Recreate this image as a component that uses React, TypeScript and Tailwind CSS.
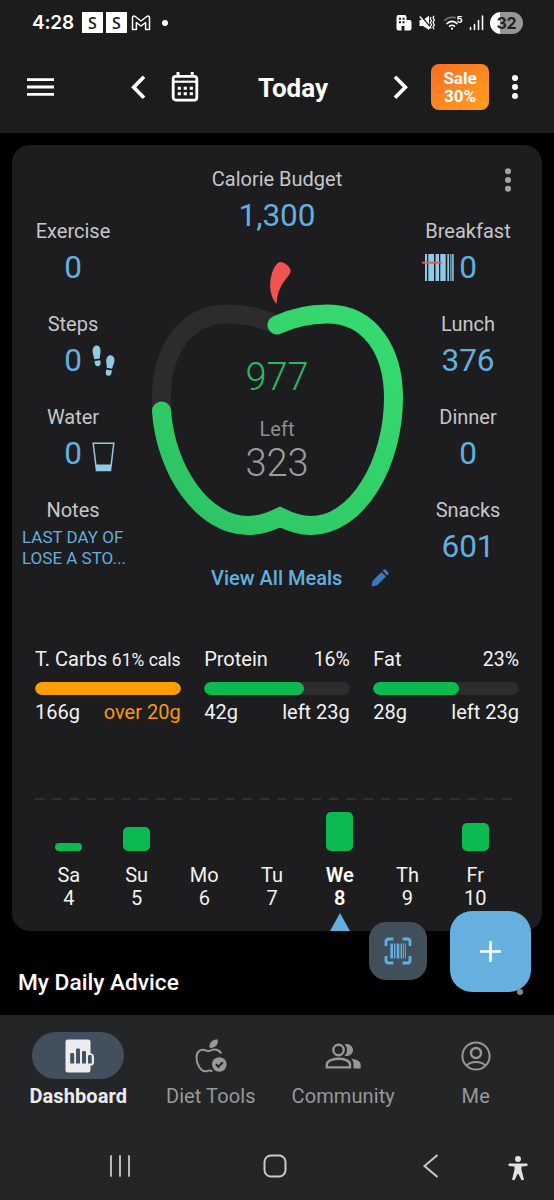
import type { ReactNode } from "react";
import clsx from "clsx";

type StatProps = {
  label: string;
  value: string;
  before?: ReactNode;
  after?: ReactNode;
};

type MacroProps = {
  name: string;
  percent: string;
  amount: string;
  rest: string;
  progress: number;
  over?: boolean;
};

const macros: MacroProps[] = [
  { name: "T. Carbs", percent: "61% cals", amount: "166g", rest: "over 20g", progress: 100, over: true },
  { name: "Protein", percent: "16%", amount: "42g", rest: "left 23g", progress: 68.5 },
  { name: "Fat", percent: "23%", amount: "28g", rest: "left 23g", progress: 59 },
];

const days = [
  { day: "Sa", date: 4, bar: 8 },
  { day: "Su", date: 5, bar: 24 },
  { day: "Mo", date: 6, bar: 0 },
  { day: "Tu", date: 7, bar: 0 },
  { day: "We", date: 8, bar: 39.5, current: true },
  { day: "Th", date: 9, bar: 0 },
  { day: "Fr", date: 10, bar: 28.5 },
];

function StatusBar() {
  return (
    <div className="flex h-[45px] items-center pl-[32px] text-white">
      <span className="w-[50px] font-[Inter] text-[19px] leading-none font-semibold tracking-[-0.2px]">4:28</span>
      <span className="flex h-[21px] w-[21px] items-center justify-center bg-white font-['Open_Sans'] text-[16px] leading-none font-semibold text-[#1c1c1c]">S</span>
      <span className="ml-[3px] flex h-[21px] w-[21px] items-center justify-center bg-white font-['Open_Sans'] text-[16px] leading-none font-semibold text-[#1c1c1c]">S</span>
      <svg className="ml-[4px] h-[16px] w-[20px]" viewBox="0 0 20 16" fill="none" stroke="currentColor" strokeWidth="1.5" strokeLinejoin="round">
        <path d="M1.5 14.5V2.6C1.5 1 3.2.7 4.2 1.5L10 6l5.8-4.500C16.800.7 18.500 1 18.500 2.600V14.500H14.600V7.500L10 11 5.400 7.500V14.500Z" />
      </svg>
      <span className="ml-[11px] h-[6px] w-[6px] rounded-full bg-white" />
      <svg className="ml-[228px] h-[16px] w-[16px]" viewBox="0 0 16 16">
        <path fill="currentColor" fillRule="evenodd" d="M2.500 0H8.500Q10.500 0 10.500 2V5H13.500Q15.500 5 15.500 7V13.500Q15.500 15.500 13.500 15.500H8.500V11H5.500V15.500H2.500Q.5 15.500.5 13.500V2Q.5 0 2.500 0ZM3 2.800V4.800H5V2.800ZM6.500 2.800V4.800H8.500V2.800ZM3 6.200V8.200H5V6.200ZM6.500 6.200V8.200H8.500V6.200Z" />
      </svg>
      <svg className="ml-[7px] h-[16px] w-[17px]" viewBox="0 0 17 16" fill="none" stroke="currentColor">
        <path d="M.5 5H4L10 .8V15L4 11H.5Z" fill="currentColor" stroke="none" />
        <path d="M1.200.2L10 11.200" stroke="#1c1c1c" strokeWidth="2.200" />
        <path d="M.8 1.500L11 13.500" strokeWidth="1.400" />
        <path d="M12.200 2l-1 1.700 1.400 2-1.400 2 1.400 2-1.400 2 1 1.700M15 .8l-1 2 1.400 2.300-1.400 2.400 1.400 2.400-1.400 2.300 1 2" strokeWidth="1.200" />
      </svg>
      <svg className="ml-[7px] h-[16px] w-[20px]" viewBox="0 0 20 16" fill="none" stroke="currentColor" strokeWidth="1.600" strokeLinecap="round">
        <path d="M1.500 5.500C4.500 2.800 8 1.700 12 2.600" stroke="#777" />
        <path d="M4 8.600C7 6 11 6 14 8.600M6.500 11.200C8 10 10 10 11.500 11.200" />
        <circle cx="9" cy="13.700" r="1.100" fill="currentColor" stroke="none" />
        <text x="13.500" y="8" fill="currentColor" stroke="none" className="font-[Inter] text-[9.500px] font-bold">5</text>
      </svg>
      <svg className="ml-[6px] h-[16px] w-[15px]" viewBox="0 0 15 16" stroke="currentColor" strokeWidth="1.600" strokeLinecap="round">
        <path d="M1.500 12.500V14.500M5.500 9.500V14.500M9.500 5.500V14.500M13.500 1V14.500" />
      </svg>
      <span className="ml-[6px] flex h-[22px] w-[33px] items-center justify-center rounded-full bg-gradient-to-r from-white from-30% to-[#969696] to-30% font-[Inter] text-[16px] leading-none font-bold tracking-[-0.3px] text-[#222]">32</span>
    </div>
  );
}

function Toolbar() {
  return (
    <div className="flex h-[84px] items-center pl-[27px] text-white">
      <svg className="h-[20px] w-[27px]" viewBox="0 0 27 20" stroke="currentColor" strokeWidth="2.800">
        <path d="M0 2.700H27M0 10H27M0 17.300H27" />
      </svg>
      <svg className="ml-[76px] h-[24px] w-[17px]" viewBox="0 0 17 24" fill="none" stroke="currentColor" strokeWidth="3.700">
        <path d="M14 1.700L3.700 12.200 14 22.700" />
      </svg>
      <svg className="ml-[24px] h-[30px] w-[28px]" viewBox="0 0 28 30" fill="none" stroke="currentColor">
        <rect x="2.200" y="4.300" width="23.600" height="23.800" rx="2.500" strokeWidth="2.800" />
        <path d="M2 9.700H26" strokeWidth="2.200" />
        <path d="M7 0V5M21.200 0V5" strokeWidth="3" />
        <path d="M6.700 16.200H22M6.700 21.700H22" strokeWidth="3" strokeDasharray="3.200 2.800" />
      </svg>
      <h1 className="mt-[2px] ml-[23px] w-[142px] pl-[36px] text-[26px] leading-8 font-bold">Today</h1>
      <svg className="ml-[28px] h-[24px] w-[17px]" viewBox="0 0 17 24" fill="none" stroke="currentColor" strokeWidth="3.700">
        <path d="M3 1.700L13.300 12.200 3 22.700" />
      </svg>
      <button type="button" className="ml-[22px] flex h-[46px] w-[58px] flex-col items-center justify-center rounded-lg bg-gradient-to-br from-[#ff6c24] to-[#ffa01e] text-[17px] leading-[18px] font-bold">
        <span>Sale</span>
        <span>30%</span>
      </button>
      <svg className="ml-[22px] h-[26px] w-[8px]" viewBox="0 0 8 26" fill="currentColor">
        <circle cx="4" cy="4" r="3" />
        <circle cx="4" cy="13" r="3" />
        <circle cx="4" cy="22" r="3" />
      </svg>
    </div>
  );
}

function Stat({ label, value, before, after }: StatProps) {
  return (
    <div className="h-[93px] text-center">
      <p className="text-[20px] leading-6 text-[#c6c6c8]">{label}</p>
      <div className="mt-[7px] flex h-9 items-center justify-center text-[31.500px] leading-9 text-[#63afdf]">
        {before}
        {value}
        {after}
      </div>
    </div>
  );
}

function BarcodeIcon() {
  return (
    <svg className="mr-[5px] -ml-[37px] h-[28px] w-[32px]" viewBox="0 0 32 28">
      <path fill="#91cbe3" d="M3 0H5V27H3ZM6.300 0H12V27H6.300ZM13.500 0H17V27H13.500ZM18.300 0H23.700V27H18.300ZM25.300 0H27V27H25.300ZM28.300 0H31.700V27H28.300Z" />
      <path d="M29.700 0V27" stroke="#1d1d1f" strokeWidth=".7" />
      <path d="M0 8.700H20" stroke="#e15b58" strokeWidth="2" />
    </svg>
  );
}

function StepsIcon() {
  return (
    <svg className="-mr-[33px] ml-[10px] h-[32px] w-[23px]" viewBox="0 0 23 32" fill="#91cbe3">
      <path d="M4.800.5C7.500.5 8.800 3.500 8.500 7c-.2 2.500-.8 4.500-.7 6.500L2.300 14.200C2 11.500.5 9 .6 5.700.7 2.500 2.300.5 4.800.5Z" />
      <path d="M2.600 16l5.500-.8c1.200 3.300.4 5.600-1.900 6C3.600 21.600 2.700 19.500 2.600 16Z" />
      <path d="M18.700 10.200c2.500.2 4 2.400 3.800 5.500-.2 3-1.900 5.300-2.300 8l-5.500-.9c.3-2.200-.5-4.200-.5-6.500.1-3.500 1.800-6.300 4.500-6.100Z" />
      <path d="M14.300 24.500l5.600 1c-.2 3.500-1.400 5.700-3.800 5.300-2.400-.4-2.900-2.600-1.800-6.300Z" />
    </svg>
  );
}

function GlassIcon() {
  return (
    <svg className="-mr-[33px] mt-[5px] ml-[10px] h-[30px] w-[23px]" viewBox="0 0 23 30">
      <path d="M1.200 1.300H21.800L18.500 28.500H4.500Z" fill="none" stroke="#91cbe3" strokeWidth="1.500" />
      <path d="M3.700 22.500H19.300L18.500 28.800H4.500Z" fill="#91cbe3" />
    </svg>
  );
}

function AppleGauge() {
  return (
    <div className="relative h-[290px] w-[286px]">
      <svg className="h-[290px] w-[286px]" viewBox="134 255 286 290" fill="none">
        <defs>
          <linearGradient id="apple" x1="380" y1="320" x2="180" y2="520" gradientUnits="userSpaceOnUse">
            <stop stopColor="#36da70" />
            <stop offset="1" stopColor="#2dc463" />
          </linearGradient>
        </defs>
        <path d="M161.500 411V398C161.500 352 184 314 228 314C245 314 262 318 277 325" stroke="#2c2c2e" strokeWidth="19" />
        <path
          d="M277 325C292 318 310 314 327 314C371 314 393.500 352 393.500 398C393.500 462 358 525.500 311 525.500C299 525.500 290 522 280 517C270 522 260 525.500 248 525.500C203 525.500 165.500 470 161.500 411"
          stroke="url(#apple)"
          strokeWidth="19"
          strokeLinecap="round"
        />
        <path d="M276.500 304C270.500 297 268.500 286 271.500 275C273.500 267 277 262.500 280.500 262C284 262 288 265 290 268.500C291.500 271.500 290 274 287.500 277C281 285 277.500 291 276.500 304Z" fill="#f15350" />
      </svg>
      <div className="absolute inset-x-0 top-[102px] text-center">
        <p className="text-[38px] leading-10 font-[350] text-[#2bb863]">977</p>
        <p className="mt-[20px] text-[20px] leading-6 text-[#8d8d8f]">Left</p>
        <p className="mt-[2px] text-[38px] leading-10 font-[350] text-[#9c9c9e]">323</p>
      </div>
    </div>
  );
}

function Macro({ name, percent, amount, rest, progress, over }: MacroProps) {
  return (
    <div className="text-[20px] leading-6 whitespace-nowrap text-[#f2f2f2]">
      <div className="flex h-6 items-baseline justify-between">
        <span>{name}</span>
        <span className={over ? "text-[17.500px]" : "text-[19.500px]"}>{percent}</span>
      </div>
      <div className="mt-[11px] h-[12.500px] overflow-hidden rounded-full bg-[#2d2d2f]">
        <div className={clsx("h-full rounded-full", over ? "bg-[#ff9d05]" : "bg-[#0bba51]")} style={{ width: `${progress}%` }} />
      </div>
      <div className="mt-[5px] flex justify-between">
        <span>{amount}</span>
        <span className={clsx(over && "text-[#f79a0c]")}>{rest}</span>
      </div>
    </div>
  );
}

function WeekChart() {
  return (
    <div className="mt-[74px] ml-[23px] w-[477px]">
      <svg className="block h-[2px] w-[477px]" viewBox="0 0 477 2">
        <path d="M0 1H477" stroke="#38383a" strokeWidth="1.500" strokeDasharray="9.300 8" />
      </svg>
      <div className="mt-[3.500px] flex w-[474px]">
        {days.map(({ day, date, bar, current }) => (
          <div key={day} className={clsx("flex flex-1 flex-col items-center text-[20px] leading-6 text-[#f2f2f2]", current && "font-semibold text-white")}>
            <div className="flex h-[48px] items-end">
              {bar > 0 ? <div className="w-[27px] rounded-[5px] bg-[#0bba51]" style={{ height: bar }} /> : null}
            </div>
            <span className="mt-[11.500px]">{day}</span>
            <span className="-mt-px">{date}</span>
            {current ? (
              <svg className="mt-[3px] h-[18px] w-[20px]" viewBox="0 0 20 18">
                <path d="M10 0L20 18H0Z" fill="#63afdf" />
              </svg>
            ) : null}
          </div>
        ))}
      </div>
    </div>
  );
}

function SummaryCard() {
  return (
    <section className="relative mx-3 mt-[12px] h-[786px] rounded-[18px] bg-[#1d1d1f]">
      <svg className="absolute top-[22px] right-[30px] h-[26px] w-[8px]" viewBox="0 0 8 26" fill="#a4a4a6">
        <circle cx="4" cy="4.200" r="3" />
        <circle cx="4" cy="13" r="3" />
        <circle cx="4" cy="21.800" r="3" />
      </svg>
      <div className="grid h-[502px] grid-cols-[122px_286px_96px]">
        <div className="pt-[74px]">
          <Stat label="Exercise" value="0" />
          <Stat label="Steps" value="0" after={<StepsIcon />} />
          <Stat label="Water" value="0" after={<GlassIcon />} />
          <p className="text-center text-[20px] leading-6 text-[#c6c6c8]">Notes</p>
          <p className="mt-[5px] ml-[10px] w-[110px] text-[17px] leading-[20.500px] whitespace-nowrap text-[#63afdf]">
            LAST DAY OF
            <br />
            LOSE A STO...
          </p>
        </div>
        <div className="pt-[22px]">
          <p className="text-center text-[20px] leading-6 text-[#c6c6c8]">Calorie Budget</p>
          <p className="mt-[7px] mb-[21px] text-center text-[31.500px] leading-9 text-[#63afdf]">1,300</p>
          <AppleGauge />
          <div className="mt-[21px] flex items-center pl-[77px]">
            <a href="#meals" className="w-[132px] text-[20px] leading-6 font-medium whitespace-nowrap text-[#63afdf]">View All Meals</a>
            <svg className="ml-[28px] h-[18px] w-[18px]" viewBox="0 0 18 18" fill="#3579c6">
              <path d="M.5 17.500L1.500 12 10.500 3 15 7.500 6 16.500Z" />
              <path d="M11.700 1.800L13 .5Q14 0 14.800.7L17.200 3.200Q18 4.200 17.300 5.200L16 6.400Z" />
            </svg>
          </div>
        </div>
        <div className="pt-[74px]">
          <Stat label="Breakfast" value="0" before={<BarcodeIcon />} />
          <Stat label="Lunch" value="376" />
          <Stat label="Dinner" value="0" />
          <Stat label="Snacks" value="601" />
        </div>
      </div>
      <div className="mr-[23px] ml-[23px] grid grid-cols-3 gap-x-[23.500px]">
        {macros.map((macro) => (
          <Macro key={macro.name} {...macro} />
        ))}
      </div>
      <WeekChart />
    </section>
  );
}

function FloatingActions() {
  return (
    <div className="absolute top-[911px] right-[23px] flex items-center gap-[23px]">
      <button type="button" className="mt-[-1px] flex h-[58px] w-[58px] items-center justify-center rounded-[17px] bg-[#414f5b]">
        <svg className="h-[28px] w-[28px]" viewBox="0 0 28 28" fill="none" stroke="#63afdf">
          <path d="M2 9V4.500Q2 2 4.500 2H9.500M18.500 2H23.500Q26 2 26 4.500V9M26 19V23.500Q26 26 23.500 26H18.500M9.500 26H4.500Q2 26 2 23.500V19" strokeWidth="2.800" />
          <path d="M7.700 6.500V21.500" strokeWidth="2.600" />
          <path d="M10.700 6.500V21.500M17.300 6.500V21.500" strokeWidth="1.400" />
          <path d="M14 6.500V21.500" strokeWidth="2.600" />
          <path d="M19.300 6.500V21.500M21.300 6.500V21.500" strokeWidth="1" />
        </svg>
      </button>
      <button type="button" className="flex h-[81px] w-[81px] items-center justify-center rounded-[22px] bg-[#65b0de]">
        <svg className="h-[21px] w-[21px]" viewBox="0 0 21 21" stroke="#fff" strokeWidth="2.700">
          <path d="M10.500 0V21M0 10.500H21" />
        </svg>
      </button>
    </div>
  );
}

function DashboardIcon() {
  return (
    <svg className="ml-[3px] h-[34px] w-[30px]" viewBox="0 0 30 34">
      <path d="M3 .5H23Q25.500.5 25.500 3V14.200Q29 14.800 29 18V23Q29 26.500 25.500 26.700V31Q25.500 33.500 23 33.500H3Q.5 33.500.5 31V3Q.5.500 3 .5Z" fill="#ececec" />
      <path d="M5.200 15.300Q5.200 14 6.500 14H7.900Q9.200 14 9.200 15.300V24.500H5.200ZM11 10.800Q11 9.500 12.300 9.500H13.700Q15 9.500 15 10.800V24.500H11ZM17 13.300Q17 12 18.300 12H19.700Q21 12 21 13.300V24.500H17ZM23 17.300Q23 16 24.300 16H25.500Q26.800 16 26.800 17.300V24.500H23Z" fill="#43525e" />
    </svg>
  );
}

function DietIcon() {
  return (
    <svg className="h-[34px] w-[32px]" viewBox="0 0 32 34" fill="none">
      <path d="M26 14.500C24.500 10.500 19.500 9.300 15 11.700 12.800 12.700 12.300 12.300 10.500 11.300 5.500 9.300 1.500 13 1.500 18.500 1.500 25.500 6 32.300 10 32.300 12.500 32.300 13 31.300 15 31.500 16 31.700 16.500 32 17.500 32.200" stroke="#989899" strokeWidth="2" />
      <path d="M14.800 9C13.500 4 17 .7 22.800.3 23.500 5.500 20.500 9.300 14.800 9Z" fill="#989899" />
      <circle cx="24.300" cy="25.500" r="7.300" fill="#989899" />
      <path d="M20.900 25.300L23.400 27.800 27.800 23.300" stroke="#242527" strokeWidth="2" />
    </svg>
  );
}

function CommunityIcon() {
  return (
    <svg className="h-[26px] w-[36px]" viewBox="0 0 36 26" fill="none" stroke="#989899" strokeWidth="2.400">
      <circle cx="13.500" cy="7" r="5.200" />
      <path d="M1.800 24.400V21.500C1.800 17.500 9 15.800 13.800 15.800S25 17.500 25 21.500V24.400Z" />
      <path d="M19.500 1C24 .3 28 3 28 7S24 13.700 19.500 13C23 9.500 23 4.500 19.500 1ZM26 15.500C32 16.500 35.700 18.500 35.700 21.500V25.600H28.500V21.500C28.500 19 27.800 17 26 15.500Z" fill="#989899" stroke="none" />
    </svg>
  );
}

function MeIcon() {
  return (
    <svg className="h-[30px] w-[30px]" viewBox="0 0 30 30" fill="none" stroke="#989899" strokeWidth="2">
      <circle cx="15" cy="15" r="13.600" />
      <circle cx="15" cy="12" r="5" strokeWidth="2.400" />
      <path d="M5.500 24.500C10 19.700 20 19.700 24.500 24.500" />
    </svg>
  );
}

const tabs = [
  { label: "Dashboard", icon: <DashboardIcon />, active: true },
  { label: "Diet Tools", icon: <DietIcon /> },
  { label: "Community", icon: <CommunityIcon /> },
  { label: "Me", icon: <MeIcon /> },
];

function BottomNav() {
  return (
    <nav className="flex h-[107px] px-3 pt-[17px]">
      {tabs.map(({ label, icon, active }) => (
        <div key={label} className="flex flex-1 flex-col items-center">
          <div className={clsx("flex h-[47px] w-[92px] items-center justify-center rounded-full", active && "bg-[#41505c]")}>{icon}</div>
          <span className={clsx("mt-[5px] text-[20px] leading-6 whitespace-nowrap", active ? "font-bold tracking-[0.100px] text-[#ececec]" : "tracking-[0.100px] text-[#989899]")}>{label}</span>
        </div>
      ))}
    </nav>
  );
}

function SystemNav() {
  return (
    <div className="flex h-[78px] items-center pt-[10px]">
      <svg className="ml-[108px] h-[26px] w-[24px]" viewBox="0 0 24 26" stroke="#b9b9ba" strokeWidth="2" strokeLinecap="round">
        <path d="M3 3V23M12 3V23M21 3V23" />
      </svg>
      <svg className="ml-[130px] h-[26px] w-[26px]" viewBox="0 0 26 26" fill="none" stroke="#c9c9ca" strokeWidth="2">
        <rect x="2.500" y="2.500" width="21" height="21" rx="6.500" />
      </svg>
      <svg className="ml-[133px] h-[26px] w-[18px]" viewBox="0 0 18 26" fill="none" stroke="#c9c9ca" strokeWidth="2">
        <path d="M16.500 2L3.500 13 16.500 24" />
      </svg>
      <svg className="mt-[3px] ml-[68px] h-[26px] w-[22px]" viewBox="0 0 22 26" fill="#e2e2e3">
        <circle cx="11" cy="4" r="3" />
        <path d="M2 8.500H20Q21.200 9.700 20 11L14.500 11.500V15L17 24.800 14.500 25.200 11.500 19H10.500L7.500 25.200 5 24.800 7.500 15V11.500L2 11Q.8 9.700 2 8.500Z" />
      </svg>
    </div>
  );
}

export default function App() {
  return (
    <div className="relative flex h-[1200px] w-[554px] flex-col overflow-hidden bg-black font-[Roboto,sans-serif]">
      <header className="h-[133px] shrink-0 bg-[#1c1c1c]">
        <StatusBar />
        <Toolbar />
      </header>
      <SummaryCard />
      <div className="mt-[36px] flex h-8 items-center justify-between pr-[31px] pl-[18px]">
        <h2 className="text-[22.700px] leading-8 font-medium text-white">My Daily Advice</h2>
        <span className="mt-[17px] h-[6px] w-[6px] rounded-full bg-[#8a8a8c]" />
      </div>
      <footer className="mt-auto h-[185px] bg-[#242527]">
        <BottomNav />
        <SystemNav />
      </footer>
      <FloatingActions />
    </div>
  );
}
